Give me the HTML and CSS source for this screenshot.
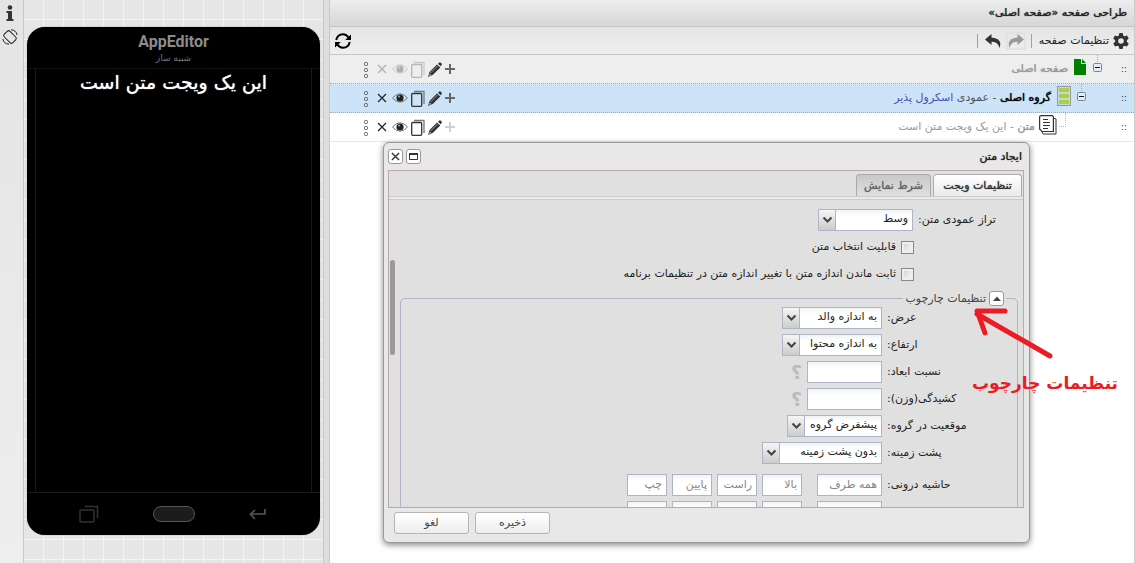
FILE: index.html
```html
<!DOCTYPE html>
<html lang="fa">
<head>
<meta charset="utf-8">
<title>AppEditor</title>
<link rel="stylesheet" href="styles.css">
</head>
<body>
<svg class="defs" aria-hidden="true">
  <symbol id="dots" viewBox="0 0 6 17"><g fill="none" stroke="#555"><rect x="1.5" y="1.5" width="3" height="3" rx="1"/><rect x="1.5" y="7.500" width="3" height="3" rx="1"/><rect x="1.5" y="13.500" width="3" height="3" rx="1"/></g></symbol>
  <symbol id="cross" viewBox="0 0 10 10"><path d="M1 1l8 8M9 1l-8 8" stroke="#222" stroke-width="1.2"/></symbol>
  <symbol id="eye" viewBox="0 0 16 12"><path d="M.5 6Q8-2.500 15.500 6 8 14.500.5 6z" fill="none" stroke="#777"/><circle cx="8" cy="6" r="3.600" fill="#222"/><circle cx="7" cy="4.500" r="1" fill="#aaa"/></symbol>
  <symbol id="copy" viewBox="0 0 14 17"><path d="M3 1.500h10V14" fill="none" stroke="#777" stroke-width="1.300"/><rect x=".7" y="3.500" width="10" height="12.800" rx="1" fill="none" stroke="#333" stroke-width="1.300"/></symbol>
  <symbol id="pencil" viewBox="0 0 14 15"><path d="M0 15l1.500-5L9 2.500 12.300 5.500 5 12.800z" fill="#333"/><path d="M10 1.700l1.300-1.200q.7-.5 1.500.2l.8.800q.7.800 0 1.500L12.600 4.300z" fill="#333"/><path d="M2.500 11L9.500 4" stroke="#999"/><path d="M1 14l.8-2.400 1.500 1.500z" fill="#bbb"/></symbol>
  <symbol id="plus" viewBox="0 0 10 10"><path d="M5 0v10M0 5h10" stroke="#666" stroke-width="2"/></symbol>
  <symbol id="minus" viewBox="0 0 9 9"><rect x=".5" y=".5" width="8" height="8" rx="1" fill="#e6ecf5" stroke="#7484a0"/><path d="M2 4.500h5" stroke="#112"/></symbol>
</svg>
<div class="app">
  <nav class="rail">
    <button class="plain" aria-label="info"><svg width="8" height="16" viewBox="0 0 8 16"><circle cx="4" cy="2.500" r="2.300" fill="#333"/><path d="M.5 6H6v8h1.500v2H.5v-2H2V8H.5z" fill="#333"/></svg></button>
    <button class="plain" aria-label="rotate"><svg width="16" height="16" viewBox="0 0 16 16"><g fill="none" stroke="#222"><rect x="4" y="2" width="8" height="12" rx="2" transform="rotate(-45 8 8)"/><path d="M9 .8q5 .2 6.200 5.200M7 15.200Q2 15 .8 10"/></g></svg></button>
  </nav>
  <section class="preview">
    <div class="phone">
      <header class="phone-head"><strong>AppEditor</strong><span dir="rtl">شبیه ساز</span></header>
      <div class="screen" dir="rtl">این یک ویجت متن است</div>
      <footer class="phone-keys">
        <svg width="20" height="18" viewBox="0 0 20 18"><g fill="none" stroke="#333" stroke-width="1.500"><rect x="1" y="5" width="14" height="12" rx="1"/><path d="M6 1.500h12.500V13"/></g></svg>
        <span class="home"></span>
        <svg width="17" height="11" viewBox="0 0 17 11"><path d="M16 0v5H2M6 1L1.500 5.200 6 10" fill="none" stroke="#555" stroke-width="1.700"/></svg>
      </footer>
    </div>
  </section>
  <div class="splitter"></div>
  <main class="design" dir="rtl">
    <h1 class="title">طراحی صفحه «صفحه اصلی»</h1>
    <div class="toolbar">
      <button class="plain settings"><svg width="16" height="16" viewBox="0 0 16 16"><g fill="#333"><rect x="6" y="0" width="4" height="16" rx="1"/><rect x="6" y="0" width="4" height="16" rx="1" transform="rotate(60 8 8)"/><rect x="6" y="0" width="4" height="16" rx="1" transform="rotate(120 8 8)"/><circle cx="8" cy="8" r="6"/></g><circle cx="8" cy="8" r="2.800" fill="#e9e9e9"/></svg>تنظیمات صفحه</button>
      <i class="sep"></i>
      <button class="plain redo" aria-label="redo"><svg width="16" height="14" viewBox="0 0 16 14"><path d="M9.500 0L16 5.500 9.500 11V7.700Q3.500 7 1.500 14-2 4.500 9.500 3.500z" fill="#999"/></svg></button>
      <button class="plain" aria-label="undo"><svg width="16" height="14" viewBox="0 0 16 14"><path d="M6.500 0L0 5.500 6.500 11V7.700q6-.7 8 6.300Q18 4.500 6.500 3.500z" fill="#333"/></svg></button>
      <i class="sep"></i>
      <button class="plain refresh" aria-label="refresh"><svg width="16" height="16" viewBox="0 0 16 16"><g fill="none" stroke="#000" stroke-width="2"><path d="M1.200 7Q2.500 1.300 8 1.200q3.500 0 5.500 3.300M14.800 9q-1.300 5.700-6.800 5.800-3.500 0-5.500-3.300"/></g><path d="M16 1.500V7h-5.800zM0 14.500V9h5.800z"/></svg></button>
    </div>
    <ul class="tree">
      <li class="node root">
        <span class="grip">::</span><span class="twig"><svg width="9" height="9"><use href="#minus"/></svg></span>
        <svg class="kind" width="12" height="16" viewBox="0 0 12 16"><path d="M0 0h7v5h5v11H0z" fill="#008000"/><path d="M8 0l4 4H8z" fill="#008000"/></svg>
        <span class="name"><b>صفحه اصلی</b></span>
        <span class="acts" dir="ltr"><button class="plain"><svg width="6" height="17"><use href="#dots"/></svg></button><button class="plain off"><svg width="10" height="10"><use href="#cross"/></svg></button><button class="plain wide off"><svg width="16" height="12"><use href="#eye"/></svg></button><button class="plain off"><svg width="14" height="17"><use href="#copy"/></svg></button><button class="plain mid"><svg width="14" height="15"><use href="#pencil"/></svg></button><button class="plain slim"><svg width="10" height="10"><use href="#plus"/></svg></button></span>
      </li>
      <li class="node picked">
        <span class="grip">::</span><span class="twig"><svg width="9" height="9"><use href="#minus"/></svg></span>
        <svg class="kind" width="14" height="20" viewBox="0 0 14 20"><rect x=".5" y=".5" width="13" height="19" fill="#c9d8dc" stroke="#999"/><path d="M2 2h10v4H2zM2 8h10v4H2zM2 14h10v4H2z" fill="#a9cf46"/></svg>
        <span class="name"><b>گروه اصلی</b> - عمودی <em>اسکرول پذیر</em></span>
        <span class="acts" dir="ltr"><button class="plain"><svg width="6" height="17"><use href="#dots"/></svg></button><button class="plain"><svg width="10" height="10"><use href="#cross"/></svg></button><button class="plain wide"><svg width="16" height="12"><use href="#eye"/></svg></button><button class="plain"><svg width="14" height="17"><use href="#copy"/></svg></button><button class="plain mid"><svg width="14" height="15"><use href="#pencil"/></svg></button><button class="plain slim"><svg width="10" height="10"><use href="#plus"/></svg></button></span>
      </li>
      <li class="node leaf">
        <span class="grip">::</span><span class="twig elbow"></span>
        <svg class="kind" width="18" height="20" viewBox="0 0 18 20"><path d="M14 3l3 1v15H4l-1-2" fill="none" stroke="#333"/><path d="M.6 2q0-1.400 1.400-1.400h11q1.400 0 1.400 1.400v14.500H3L.6 14z" fill="#fff" stroke="#333" stroke-width="1.200"/><path d="M4 4.500h5M4 7.500h7M4 10.500h7M4 13.500h5" stroke="#333" stroke-width="1.200"/></svg>
        <span class="name"><b>متن</b> - این یک ویجت متن است</span>
        <span class="acts" dir="ltr"><button class="plain"><svg width="6" height="17"><use href="#dots"/></svg></button><button class="plain"><svg width="10" height="10"><use href="#cross"/></svg></button><button class="plain wide"><svg width="16" height="12"><use href="#eye"/></svg></button><button class="plain"><svg width="14" height="17"><use href="#copy"/></svg></button><button class="plain mid"><svg width="14" height="15"><use href="#pencil"/></svg></button><button class="plain slim off"><svg width="10" height="10"><use href="#plus"/></svg></button></span>
      </li>
    </ul>
    <div class="dialog" role="dialog" aria-label="ایجاد متن">
      <header class="dialog-head">
        <h2>ایجاد متن</h2>
        <button class="chip" aria-label="maximize"><svg width="9" height="7" viewBox="0 0 9 7"><path d="M.5 1h8v5.500h-8z" fill="none" stroke="#333"/><path d="M0 1h9" stroke="#333" stroke-width="2"/></svg></button>
        <button class="chip" aria-label="close"><svg width="9" height="9" viewBox="0 0 10 10"><path d="M1 1l8 8M9 1l-8 8" stroke="#333" stroke-width="1.500"/></svg></button>
      </header>
      <div class="dialog-body">
        <div class="tabs"><button class="tab active">تنظیمات ویجت</button><button class="tab">شرط نمایش</button></div>
        <div class="tabline"></div>
        <form class="form" id="widget">
          <div class="row first"><label for="va">تراز عمودی متن:</label><select id="va" class="w95"><option>وسط</option></select></div>
          <div class="check"><input type="checkbox" id="c1"><label for="c1">قابلیت انتخاب متن</label></div>
          <div class="check"><input type="checkbox" id="c2"><label for="c2">ثابت ماندن اندازه متن با تغییر اندازه متن در تنظیمات برنامه</label></div>
          <fieldset>
            <legend><button type="button" class="chip" aria-label="collapse"><svg width="8" height="5"><path d="M0 5l4-4.500L8 5z" fill="#444"/></svg></button>تنظیمات چارچوب</legend>
            <div class="row"><label for="w">عرض:</label><select id="w" class="w100"><option>به اندازه والد</option></select></div>
            <div class="row"><label for="h">ارتفاع:</label><select id="h" class="w100"><option>به اندازه محتوا</option></select></div>
            <div class="row"><label for="r">نسبت ابعاد:</label><input id="r" class="w75"><span class="help">؟</span></div>
            <div class="row"><label for="g">کشیدگی(وزن):</label><input id="g" class="w75"><span class="help">؟</span></div>
            <div class="row"><label for="p">موقعیت در گروه:</label><select id="p" class="w95"><option>پیشفرض گروه</option></select></div>
            <div class="row"><label for="b">پشت زمینه:</label><select id="b" class="w120"><option>بدون پشت زمینه</option></select></div>
            <div class="row sides"><label for="m">حاشیه درونی:</label><input id="m" class="w65" placeholder="همه طرف"><input aria-label="بالا" class="w40 gap" placeholder="بالا"><input aria-label="راست" class="w40" placeholder="راست"><input aria-label="پایین" class="w40" placeholder="پایین"><input aria-label="چپ" class="w40" placeholder="چپ"></div>
            <div class="row"><label for="n">حاشیه بیرونی:</label><input id="n" class="w65" placeholder="همه طرف"><input aria-label="بالا" class="w40 gap" placeholder="بالا"><input aria-label="راست" class="w40" placeholder="راست"><input aria-label="پایین" class="w40" placeholder="پایین"><input aria-label="چپ" class="w40" placeholder="چپ"></div>
          </fieldset>
        </form>
        <span class="thumb"></span>
      </div>
      <footer class="dialog-foot"><button form="widget" type="button">ذخیره</button><button type="button">لغو</button></footer>
    </div>
    <div class="note">
      <svg width="82" height="54" viewBox="0 0 82 54"><path d="M78 49L5 7M33 4H5L13 26" fill="none" stroke="#ed1c24" stroke-width="5" stroke-linecap="round" stroke-linejoin="round"/></svg>
      <strong>تنظیمات چارچوب</strong>
    </div>
  </main>
</div>
</body>
</html>
```
FILE: styles.css
```css
* { box-sizing: border-box; }
html, body { height: 100%; }
body { margin: 0; overflow: hidden; font: 11px/16px "DejaVu Sans", sans-serif; color: #222; background: #fff; }
button, input, select { font: inherit; color: inherit; margin: 0; }
svg { display: block; flex: none; }
.title, .name b, .dialog-head h2, .tab, .screen { font-weight: normal; text-shadow: 0 0 1px currentColor; }
.defs { position: absolute; width: 0; height: 0; }
.plain { border: 0; background: none; padding: 0; display: flex; align-items: center; justify-content: center; }
.app { display: flex; height: 100%; }

.rail { width: 24px; padding: 5px 4px 0 0; display: flex; flex-direction: column; align-items: center; gap: 8px; background: linear-gradient(#e4e4e4, #eee); border-right: 1px solid #c8c8c8; }
.preview { width: 299px; padding: 27px 3px 0; background: linear-gradient(transparent 19px, #f3f3f3 19px), linear-gradient(90deg, transparent 19px, #f3f3f3 19px), #e6e6e6; background-size: 20px 20px; }
.phone { height: 508px; border-radius: 18px; background: #000; display: flex; flex-direction: column; box-shadow: 0 0 1px #555; }
.phone-head { height: 42px; padding-top: 5px; display: flex; flex-direction: column; align-items: center; color: #8c8c8c; border-bottom: 1px solid #111; }
.phone-head strong { font: bold 16px/19px Roboto, sans-serif; }
.phone-head span { font-size: 9px; line-height: 14px; color: #777; }
.screen { flex: 1; margin: 0 8px; border: solid #1b1b1b; border-width: 0 1px; color: #fff; text-align: center; font-size: 19px; line-height: 27px; }
.phone-keys { height: 43px; display: flex; align-items: center; justify-content: space-between; padding: 0 54px 0 52px; border-top: 1px solid #1b1b1b; }
.home { width: 42px; height: 16px; border: 1px solid #555; border-radius: 8px; background: #1c1c1c; }
.splitter { width: 7px; border: solid #c8c8c8; border-width: 0 1px; background: #dedede; }

.design { flex: 1; position: relative; border-right: 1px solid #ccc; }
.title { margin: 0; height: 27px; padding: 0 7px; font-size: 11px; line-height: 25px; background: linear-gradient(#eee, #d6d6d6); border-bottom: 1px solid #c5c5c5; }
.toolbar { height: 28px; padding: 0 5px; display: flex; align-items: center; gap: 7px; background: linear-gradient(#e4e4e4, #efefef); border-bottom: 1px solid #c5c5c5; }
.settings { gap: 4px; }
.sep { width: 1px; height: 14px; background: #aaa08c; }
.redo { outline: 2px solid #e2e2e2; }
.refresh { margin-right: auto; }
.tree { list-style: none; margin: 0; padding: 0; }
.node { height: 29px; display: flex; align-items: center; padding: 0 7px 0 28px; border-bottom: 1px dotted #aaa; color: #999; }
.root { background: #eee; }
.picked { background: #cce3f8; color: #555; }
.picked b { color: #000; }
.picked em { font-style: normal; color: #4a4fb0; }
.leaf { border-bottom: 1px solid #e8e8e8; }
.grip { width: 6px; color: #333; font-size: 9px; }
.twig { width: 28px; height: 29px; padding: 8px 19px 0 0; background: repeating-linear-gradient(#aaa 0 1px, transparent 1px 2px) 4px 0 / 1px 8px no-repeat; }
.picked .twig { width: 44px; padding-right: 35px; }
.twig.elbow { width: 61px; height: 14px; padding: 0 55px 0 0; align-self: flex-start; background: none; }
.elbow::before { content: ""; display: block; width: 6px; height: 13px; border: dotted #bbb; border-width: 0 1px 1px 0; }
.kind { margin: 0 7px 4px 6px; }
.picked .kind { margin-right: 6px; }
.leaf .kind { margin: 0 3px 4px 4px; }
.name { white-space: nowrap; }
.acts { display: flex; margin-right: auto; }
.acts .plain { width: 16px; height: 20px; }
.acts .wide { width: 20px; }
.acts .mid { width: 18px; }
.acts .slim { width: 12px; }
.off { opacity: .3; }

.dialog { position: absolute; top: 142px; right: 104px; width: 647px; max-width: 100%; padding: 0 5px 0 4px; border: 1px solid #999; border-radius: 6px; background: #e8e8e8; box-shadow: 0 2px 6px #888; }
.dialog-head { height: 27px; display: flex; align-items: center; gap: 3px; }
.dialog-head h2 { margin: 0 2px 0 auto; font-size: 11px; }
.chip { width: 15px; height: 15px; padding: 0; display: inline-flex; align-items: center; justify-content: center; border: 1px solid #999; border-radius: 3px; background: #fff; }
.dialog-body { position: relative; height: 338px; overflow: hidden; border: 1px solid #b9a9ad; background: #e0e0e0; }
.tabs { display: flex; gap: 2px; height: 25px; padding: 3px 1px 0; }
.tab { width: 75px; padding: 0; white-space: nowrap; border: 1px solid #aaa; border-bottom: 0; border-radius: 4px 4px 0 0; background: linear-gradient(#c8c8c8, #e0e0e0); color: #666; }
.tab.active { width: 89px; background: linear-gradient(#fff, #eaeaea); color: #333; }
.tabline { height: 4px; border: solid #ccc; border-width: 1px 0; background: #eaeaea; }
.form { padding: 9px 5px 0 11px; }
.row { display: flex; align-items: center; gap: 5px; height: 22px; margin-bottom: 5px; }
.row label { width: 130px; text-align: left; white-space: nowrap; }
.row.first label { width: 100px; }
.row input, .row select { height: 22px; padding: 0 4px 2px; border: 1px solid #b0b4c8; border-radius: 0; background: linear-gradient(#f0f3f5, #fff 6px); }
.row select { appearance: none; padding-left: 18px; background: url("data:image/svg+xml,%3Csvg xmlns='http://www.w3.org/2000/svg' width='18' height='20'%3E%3Cdefs%3E%3ClinearGradient id='g' x2='0' y2='1'%3E%3Cstop stop-color='%23f5f5f5'/%3E%3Cstop offset='1' stop-color='%23ccc'/%3E%3C/linearGradient%3E%3C/defs%3E%3Cpath fill='url(%23g)' d='M0 0h17v20H0z'/%3E%3Cpath d='M16.500 0v20' stroke='%23b0b4c8'/%3E%3Cpath d='M4.500 7.500l4 4 4-4' fill='none' stroke='%23444' stroke-width='2'/%3E%3C/svg%3E") left top no-repeat, linear-gradient(#f0f3f5, #fff 6px); }
.w40 { width: 40px; }
.w65 { width: 65px; }
.w75 { width: 75px; }
.w95 { width: 95px; }
.w100 { width: 100px; }
.w120 { width: 120px; }
.row .gap { margin-right: 10px; }
::placeholder { color: #888; opacity: 1; }
.sides { margin-top: 10px; }
.help { color: #bbb; font: bold 19px/20px "DejaVu Sans", sans-serif; }
.check { display: flex; align-items: center; gap: 5px; height: 22px; margin-bottom: 5px; padding-right: 104px; }
.check input { appearance: none; width: 13px; height: 13px; border: 1px solid #888; background: linear-gradient(135deg, #ccc, #fff); box-shadow: inset 0 0 0 2px #eee; }
fieldset { margin: 0; padding: 0; border: 1px solid #b0b4c8; border-radius: 5px; }
legend { display: flex; align-items: center; gap: 3px; height: 17px; margin-right: 11px; padding: 0 2px; color: #444; }
.thumb { position: absolute; left: 1px; top: 89px; width: 5px; height: 95px; border-radius: 3px; background: #999; }
.dialog-foot { display: flex; justify-content: flex-end; gap: 6px; padding: 4px 0 8px 6px; }
.dialog-foot button { width: 75px; height: 22px; padding: 0; border: 1px solid #b5b5b5; border-radius: 3px; background: linear-gradient(#fff, #eee); color: #444; }

.note { position: absolute; top: 307px; right: 16px; width: 146px; color: #ed1c24; }
.note svg { margin-right: 64px; }
.note strong { display: block; margin-top: 10px; font-size: 17px; line-height: 24px; white-space: nowrap; }
```
